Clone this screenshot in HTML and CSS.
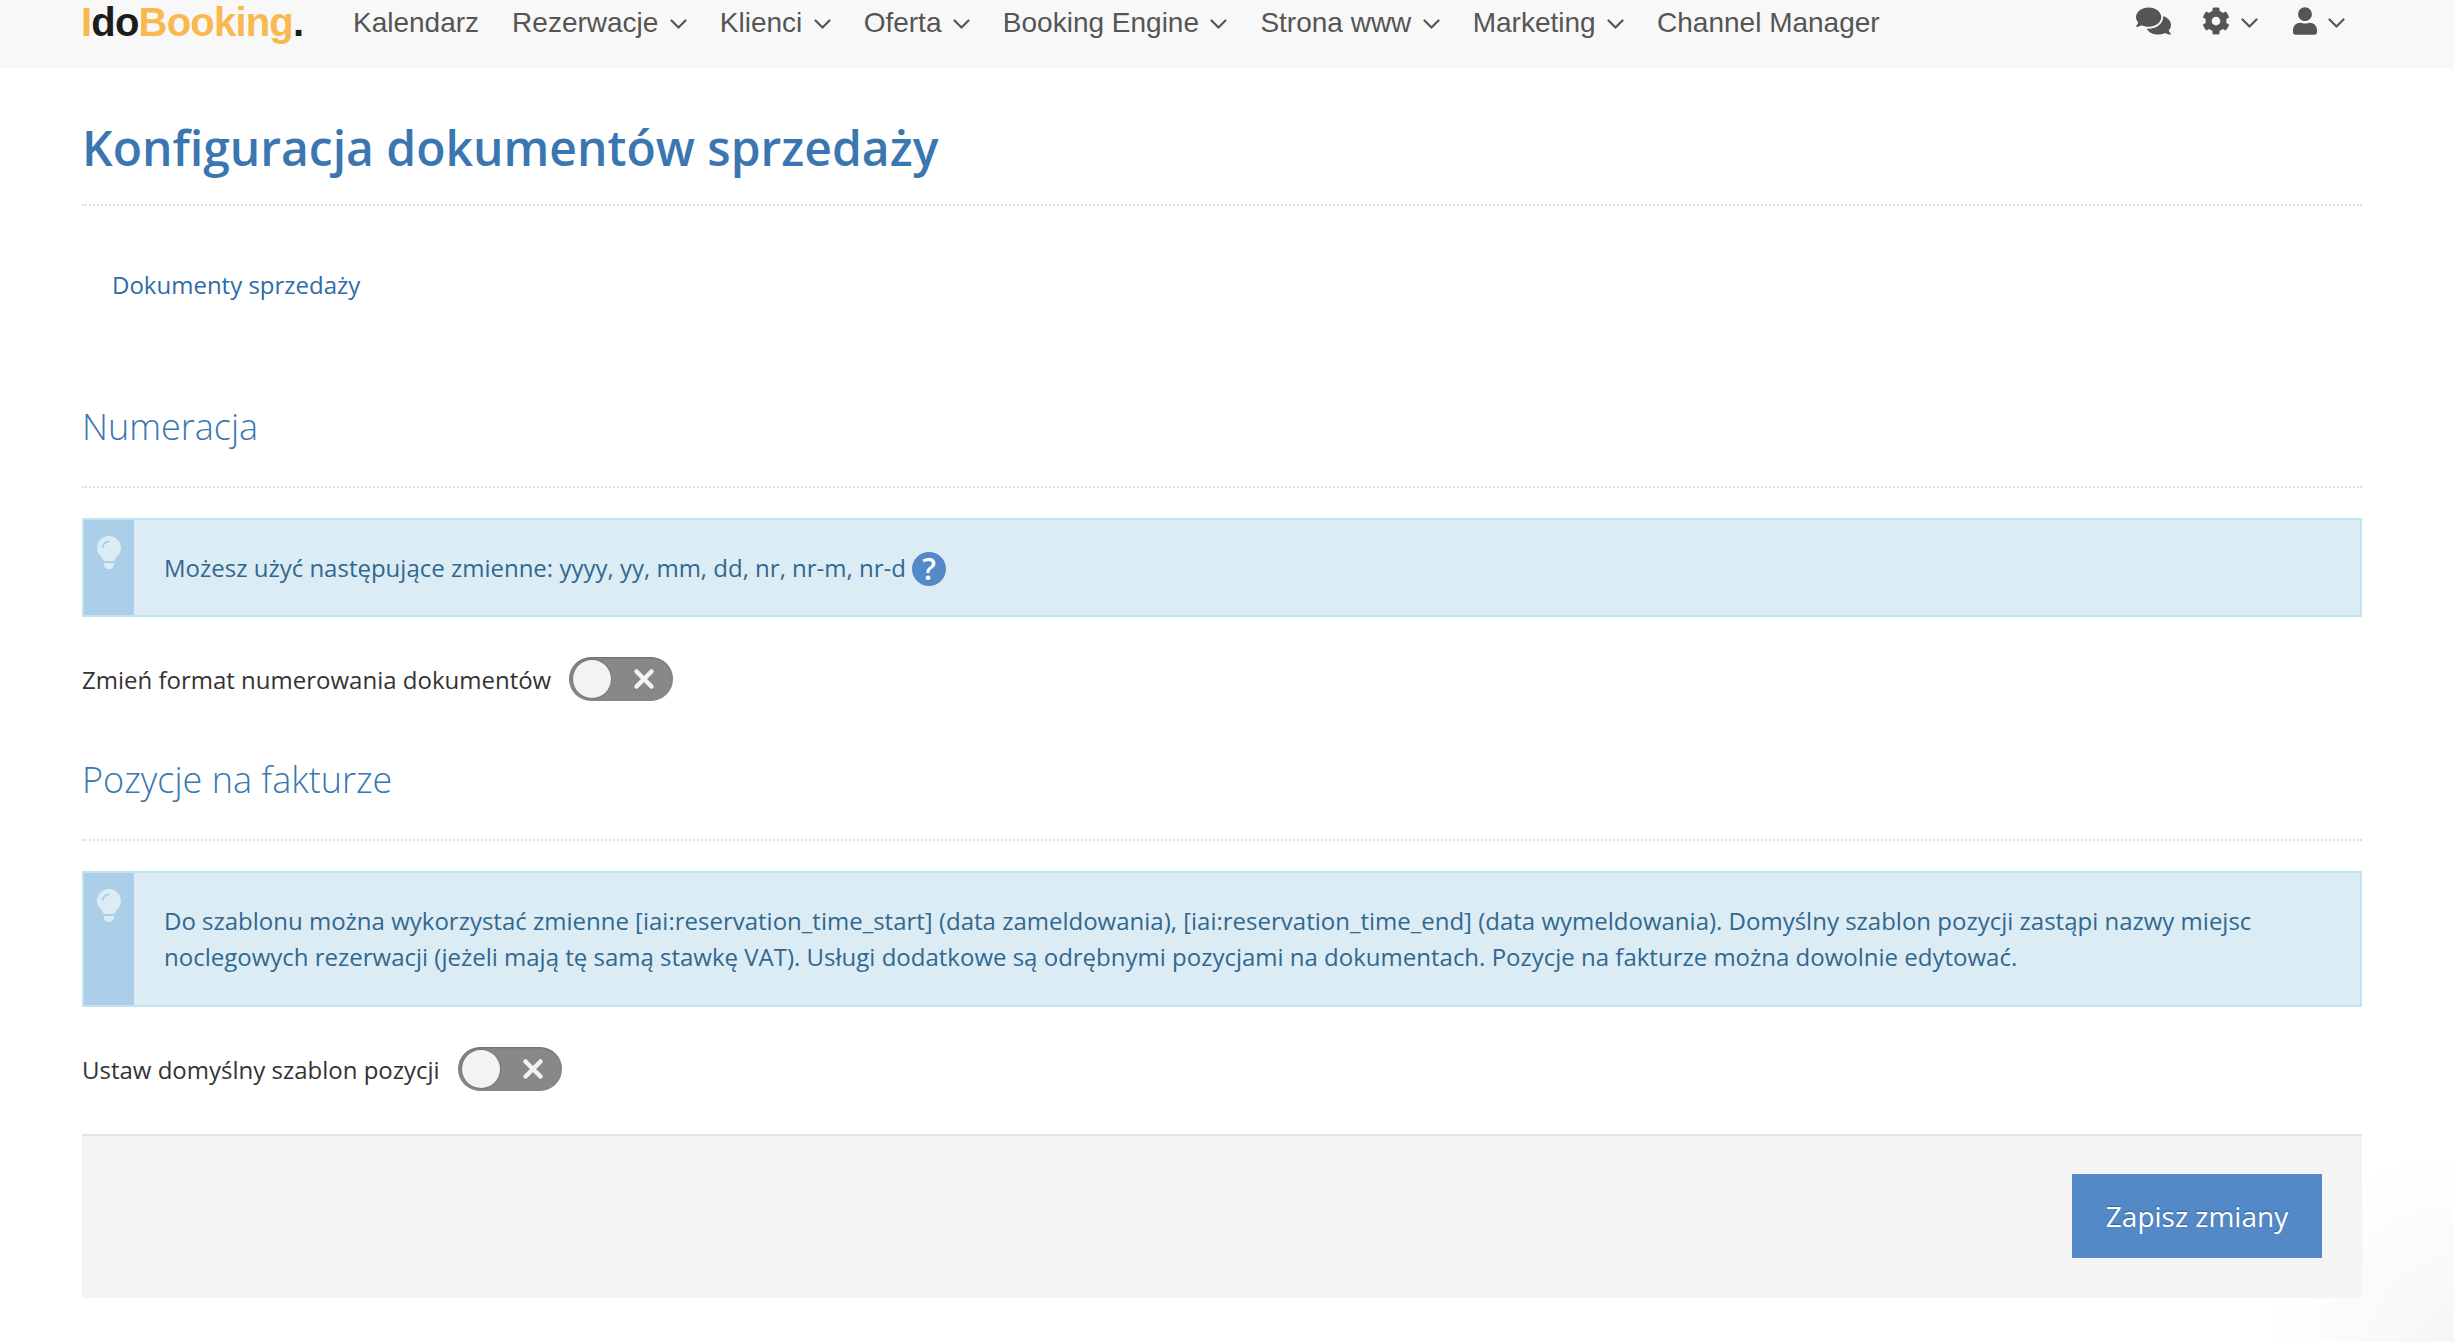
FILE: index.html
```html
<!DOCTYPE html>
<html lang="pl">
<head>
<meta charset="utf-8">
<title>Konfiguracja dokumentów sprzedaży</title>
<link rel="stylesheet" href="styles.css">
</head>
<body>
<svg class="defs" width="0" height="0" aria-hidden="true">
  <symbol id="chev" viewBox="0 0 17 10"><path d="M1.5 1.5 8.5 8.5 15.5 1.5" fill="none" stroke="currentColor" stroke-width="2.2" stroke-linecap="round" stroke-linejoin="round"/></symbol>
  <symbol id="bulb" viewBox="0 0 24 33"><path d="M12 0C5.4 0 0 5.3 0 11.8c0 3.2 1.2 5.6 3 7.7 1.5 1.7 3.2 4 3.8 5.5h10.400c.6-1.500 2.300-3.800 3.800-5.500 1.800-2.100 3-4.500 3-7.700C24 5.300 18.600 0 12 0Z" fill="currentColor"/><path d="M7 27h10v1.500C17 31 14.800 33 12 33s-5-2-5-4.500Z" fill="currentColor"/><path d="M6 11c0-3 2.500-5.500 5.500-5.500" fill="none" stroke="#abcfe8" stroke-width="1.800" stroke-linecap="round"/></symbol>
  <symbol id="cross" viewBox="0 0 22 22"><path d="M3.500 3.500 18.500 18.500M18.500 3.500 3.500 18.500" fill="none" stroke="currentColor" stroke-width="4.500" stroke-linecap="round"/></symbol>
</svg>

<header class="topbar">
  <a class="logo"><span class="logo-or">I</span><span class="logo-bk">do</span><span class="logo-or">Booking</span><span class="logo-bk">.</span></a>
  <nav class="menu">
    <a class="menu-item">Kalendarz</a>
    <a class="menu-item">Rezerwacje <svg class="chev"><use href="#chev"/></svg></a>
    <a class="menu-item">Klienci <svg class="chev"><use href="#chev"/></svg></a>
    <a class="menu-item">Oferta <svg class="chev"><use href="#chev"/></svg></a>
    <a class="menu-item">Booking Engine <svg class="chev"><use href="#chev"/></svg></a>
    <a class="menu-item">Strona www <svg class="chev"><use href="#chev"/></svg></a>
    <a class="menu-item">Marketing <svg class="chev"><use href="#chev"/></svg></a>
    <a class="menu-item">Channel Manager</a>
  </nav>
  <div class="tools">
    <svg class="ico-comments" viewBox="0 32 576 448"><path fill="currentColor" d="M416 192c0-88.400-93.100-160-208-160S0 103.600 0 192c0 34.300 14.100 65.900 38 92-13.400 30.200-35.500 54.200-35.800 54.500-2.200 2.300-2.800 5.700-1.500 8.700S4.800 352 8 352c36.600 0 66.900-12.300 88.700-25 32.200 15.700 70.300 25 111.300 25 114.900 0 208-71.600 208-160zm122 220c23.900-26 38-57.700 38-92 0-66.900-53.500-124.200-129.300-148.100.9 6.600 1.300 13.300 1.300 20.100 0 105.900-107.700 192-240 192-10.800 0-21.300-.8-31.700-1.900C207.800 439.600 281.800 480 368 480c41 0 79.100-9.200 111.300-25 21.800 12.700 52.100 25 88.700 25 3.200 0 6.100-1.900 7.300-4.800 1.300-2.900.7-6.300-1.500-8.700-.3-.3-22.400-24.200-35.800-54.500z"/></svg>
    <span class="tool"><svg class="ico-cog" viewBox="0 0 512 512"><path fill="currentColor" d="M487.400 315.700l-42.600-24.600c4.300-23.200 4.300-47 0-70.200l42.600-24.600c4.900-2.800 7.100-8.600 5.500-14-11.100-35.600-30-67.800-54.700-94.600-3.800-4.100-10-5.100-14.800-2.300L380.800 110c-17.900-15.400-38.500-27.300-60.800-35.100V25.800c0-5.600-3.900-10.500-9.400-11.700-36.700-8.200-74.300-7.800-109.200 0-5.500 1.200-9.400 6.100-9.400 11.700V75c-22.200 7.900-42.800 19.800-60.800 35.100L88.700 85.500c-4.900-2.800-11-1.900-14.800 2.300-24.700 26.700-43.600 58.900-54.700 94.600-1.700 5.400.6 11.200 5.500 14L67.300 221c-4.300 23.200-4.300 47 0 70.200l-42.600 24.600c-4.900 2.800-7.100 8.600-5.500 14 11.100 35.600 30 67.800 54.700 94.600 3.800 4.100 10 5.100 14.800 2.300l42.600-24.600c17.900 15.400 38.500 27.300 60.800 35.100v49.200c0 5.600 3.900 10.500 9.400 11.700 36.700 8.200 74.300 7.800 109.200 0 5.500-1.200 9.400-6.100 9.400-11.700v-49.200c22.200-7.900 42.800-19.800 60.800-35.100l42.600 24.600c4.900 2.800 11 1.900 14.800-2.300 24.700-26.700 43.600-58.900 54.700-94.600 1.500-5.500-.7-11.300-5.600-14.100zM256 336c-44.100 0-80-35.900-80-80s35.900-80 80-80 80 35.900 80 80-35.900 80-80 80z"/></svg><svg class="chev"><use href="#chev"/></svg></span>
    <span class="tool"><svg class="ico-user" viewBox="0 0 448 512"><path fill="currentColor" d="M224 256c70.700 0 128-57.300 128-128S294.700 0 224 0 96 57.300 96 128s57.300 128 128 128zm89.600 32h-16.700c-22.200 10.200-46.900 16-72.900 16s-50.600-5.800-72.900-16h-16.700C60.200 288 0 348.200 0 422.400V464c0 26.500 21.500 48 48 48h352c26.500 0 48-21.500 48-48v-41.600c0-74.200-60.200-134.400-134.400-134.400z"/></svg><svg class="chev"><use href="#chev"/></svg></span>
  </div>
</header>

<main class="page">
  <h1 class="page-title">Konfiguracja dokumentów sprzedaży</h1>
  <a class="doc-link">Dokumenty sprzedaży</a>

  <section class="sect sect-first">
    <h2 class="sect-title">Numeracja</h2>
    <div class="alert alert-one">
      <div class="alert-side"><svg class="bulb"><use href="#bulb"/></svg></div>
      <p class="alert-text">Możesz użyć następujące zmienne: yyyy, yy, mm, dd, nr, nr-m, nr-d <span class="help">?</span></p>
    </div>
    <div class="field">
      <span class="field-label">Zmień format numerowania dokumentów</span>
      <span class="toggle"><span class="knob"></span><svg class="cross"><use href="#cross"/></svg></span>
    </div>
  </section>

  <section class="sect">
    <h2 class="sect-title">Pozycje na fakturze</h2>
    <div class="alert alert-two">
      <div class="alert-side"><svg class="bulb"><use href="#bulb"/></svg></div>
      <p class="alert-text">Do szablonu można wykorzystać zmienne [iai:reservation_time_start] (data zameldowania), [iai:reservation_time_end] (data wymeldowania). Domyślny szablon pozycji zastąpi nazwy miejsc noclegowych rezerwacji (jeżeli mają tę samą stawkę VAT). Usługi dodatkowe są odrębnymi pozycjami na dokumentach. Pozycje na fakturze można dowolnie edytować.</p>
    </div>
    <div class="field field-two">
      <span class="field-label">Ustaw domyślny szablon pozycji</span>
      <span class="toggle"><span class="knob"></span><svg class="cross"><use href="#cross"/></svg></span>
    </div>
  </section>

  <footer class="actions">
    <button class="save" type="button">Zapisz zmiany</button>
  </footer>
</main>
</body>
</html>
```
FILE: styles.css
```css
* { box-sizing: border-box; }
html, body { height: 100%; }
body {
  margin: 0;
  overflow: hidden;
  font-family: "Open Sans", "Noto Sans", sans-serif;
  font-size: 24px;
  color: #333;
  background: radial-gradient(circle 190px at 100% 100%, #f6f6f6 0%, #fbfbfb 55%, #fff 100%) #fff;
}
.defs { position: absolute; }

.topbar {
  height: 68px;
  background: #f8f8f8;
  display: flex;
  align-items: flex-start;
  padding: 0 109px 0 82px;
  color: #555;
  font-family: "Liberation Sans", Arial, sans-serif;
}
.logo {
  font-family: "Liberation Sans", Arial, sans-serif;
  font-weight: 700;
  font-size: 40px;
  letter-spacing: -0.800px;
  line-height: 44px;
  width: 272px;
  margin-left: -1px;
  flex: none;
  white-space: nowrap;
  height: 46px;
}
.logo-or { color: #f9b94f; }
.logo-bk { color: #1c1c1c; }
.menu {
  display: flex;
  gap: 33px;
  font-size: 28px;
  line-height: 45px;
}
.menu-item { display: flex; align-items: center; gap: 11.400px; white-space: nowrap; }
.chev { width: 17px; height: 10px; flex: none; margin-top: 3px; }
.tools { margin-left: auto; display: flex; align-items: flex-start; gap: 34px; padding-top: 7px; }
.tool { display: flex; align-items: center; gap: 11px; height: 28px; }
.tool + .tool { margin-left: 1px; }
.ico-comments { width: 35px; height: 28px; margin-right: -3px; }
.ico-cog { width: 28px; height: 28px; }
.ico-user { width: 24px; height: 28px; }
.tools .chev { margin-top: 4px; }

.page { padding: 0 92px 0 82px; }
.page-title {
  margin: 0;
  height: 138px;
  padding-top: 49px;
  font-size: 48px;
  line-height: 62px;
  font-weight: 600;
  color: #3a76b0;
  border-bottom: 2px dotted #ddd;
}
.doc-link {
  display: block;
  margin-top: 62px;
  padding-left: 30px;
  line-height: 34px;
  color: #2f6ca8;
}
.sect-first { margin-top: 101px; }
.sect-title {
  margin: 0;
  font-size: 36px;
  font-weight: 300;
  line-height: 48px;
  height: 85px;
  color: #3a76b0;
  border-bottom: 2px dotted #ddd;
}
.alert {
  display: flex;
  margin-top: 30px;
  background: #dcecf5;
  border: 2px solid #bfe4ef;
  color: #31688f;
}
.alert-one { height: 99px; }
.alert-two { height: 136px; }
.alert-side {
  width: 50px;
  flex: none;
  background: #abcfe8;
  color: #dcecf5;
  display: flex;
  justify-content: center;
  padding-top: 16px;
}
.bulb { width: 24px; height: 33px; }
.alert-text { margin: 0; padding: 0 30px 0 30px; line-height: 36px; align-self: center; }
.alert-two .alert-text { align-self: flex-start; padding-top: 30px; }
.help {
  display: inline-flex;
  width: 34px;
  height: 34px;
  vertical-align: -3px;
  border-radius: 50%;
  background: #5289c6;
  color: #fff;
  font-size: 30px;
  font-weight: 600;
  line-height: 34px;
  align-items: center;
  justify-content: center;
}
.field { display: flex; align-items: center; height: 44px; margin-top: 40px; }
.field-label { color: #333; margin-right: 18px; }
.toggle {
  width: 104px;
  height: 44px;
  border-radius: 22px;
  background: #888;
  display: flex;
  align-items: center;
  justify-content: space-between;
  padding: 0 18px 0 4px;
  color: #f3f3f3;
  box-shadow: inset 0 1px 2px rgba(0,0,0,.2);
}
.knob { width: 38px; height: 38px; border-radius: 50%; background: #f3f3f3; box-shadow: 0 0 1px 1px rgba(0,0,0,.12); }
.cross { width: 22px; height: 22px; }
.sect-first + .sect { margin-top: 55px; }
.actions {
  margin-top: 43px;
  height: 164px;
  background: #f4f4f4;
  border-top: 2px solid #e4e4e4;
  display: flex;
  justify-content: flex-end;
  align-items: flex-start;
  padding: 38px 40px 0 0;
}
.save {
  width: 250px;
  height: 84px;
  border: 0;
  background: #5289c6;
  color: #fff;
  font-family: inherit;
  font-size: 28px;
  text-shadow: 0 -1px 1px rgba(30,60,110,.5);
}
```
